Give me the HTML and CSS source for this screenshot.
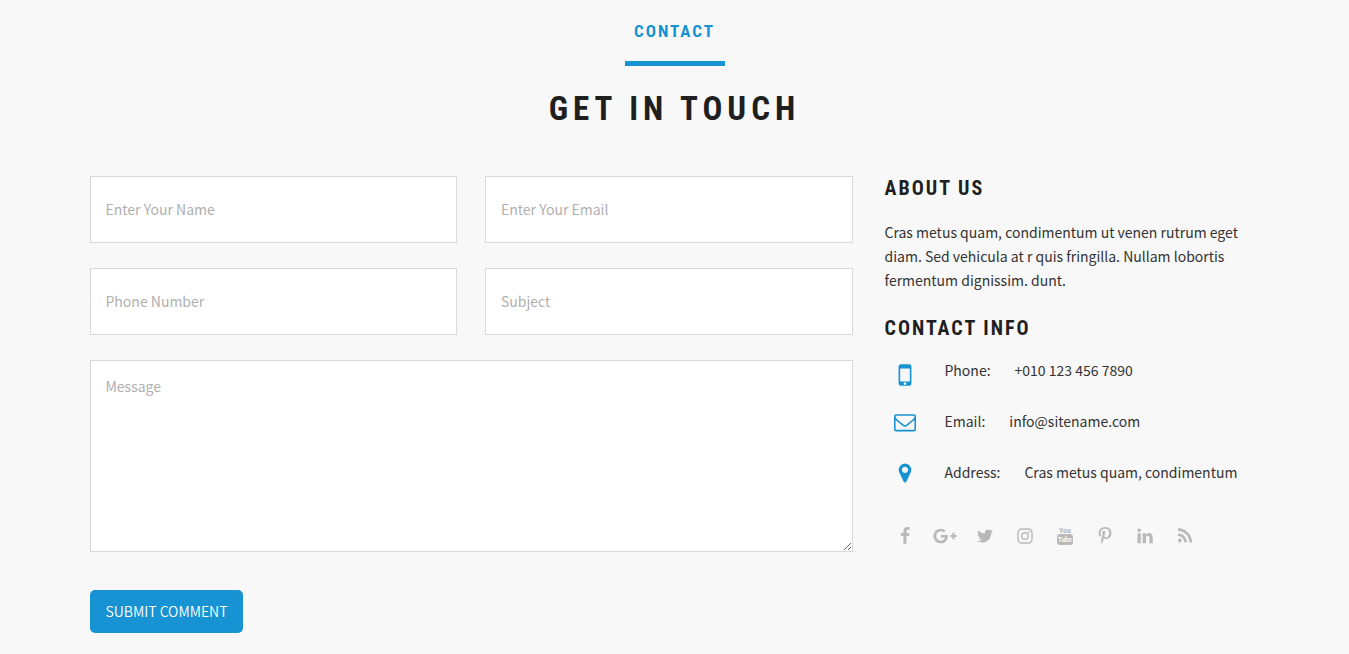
FILE: index.html
```html
<!DOCTYPE html>
<html lang="en">
<head>
    <meta charset="UTF-8">
    <meta name="viewport" content="width=device-width, initial-scale=1.0">
    <title>Contact</title>
    <link rel="stylesheet" href="styles.css">
</head>
<body>
    <section class="contact">
        <header class="section-title">
            <h4>Contact</h4>
            <h2>Get in touch</h2>
        </header>

        <div class="contact-row">
            <form class="contact-form">
                <div class="fields">
                    <input type="text" name="name" placeholder="Enter Your Name" aria-label="Enter Your Name">
                    <input type="email" name="email" placeholder="Enter Your Email" aria-label="Enter Your Email">
                    <input type="tel" name="phone" placeholder="Phone Number" aria-label="Phone Number">
                    <input type="text" name="subject" placeholder="Subject" aria-label="Subject">
                </div>
                <textarea name="message" placeholder="Message" aria-label="Message"></textarea>
                <button type="submit">SUBMIT COMMENT</button>
            </form>

            <div class="contact-info">
                <h3>About us</h3>
                <p>Cras metus quam, condimentum ut venen rutrum eget diam. Sed vehicula at r quis fringilla. Nullam lobortis fermentum dignissim. dunt.</p>

                <h3>Contact info</h3>
                <ul class="info-list">
                    <li>
                        <span class="icon"><svg class="icon-phone" viewBox="0 0 1792 1792"><path d="M976 1408q0-33-23.5-56.5t-56.5-23.5-56.5 23.5-23.5 56.5 23.5 56.5 56.5 23.5 56.5-23.5 23.5-56.5zm208-160v-704q0-13-9.5-22.5t-22.5-9.5h-512q-13 0-22.5 9.5t-9.5 22.5v704q0 13 9.5 22.5t22.5 9.5h512q13 0 22.5-9.5t9.5-22.5zm96-864v1024q0 52-38 90t-90 38h-512q-52 0-90-38t-38-90v-1024q0-52 38-90t90-38h512q52 0 90 38t38 90z"/></svg></span>
                        <span class="label">Phone:</span>
                        <span>+010 123 456 7890</span>
                    </li>
                    <li>
                        <span class="icon"><svg viewBox="0 0 1792 1792"><path d="M1664 1504v-768q-32 36-69 66-268 206-426 338-51 43-83 67t-86.5 48.5-102.5 24.5h-2q-48 0-102.5-24.5t-86.5-48.5-83-67q-158-132-426-338-37-30-69-66v768q0 13 9.5 22.5t22.5 9.5h1472q13 0 22.5-9.5t9.5-22.5zm0-1051v-24.5l-.5-13-3-12.5-5.5-9-9-7.5-14-2.5h-1472q-13 0-22.5 9.5t-9.5 22.5q0 168 147 284 193 152 401 317 6 5 35 29.5t46 37.5 44.5 31.5 50.5 27.5 43 9h2q20 0 43-9t50.5-27.5 44.5-31.5 46-37.5 35-29.5q208-165 401-317 54-43 100.5-115.5t46.5-131.5zm128-37v1088q0 66-47 113t-113 47h-1472q-66 0-113-47t-47-113v-1088q0-66 47-113t113-47h1472q66 0 113 47t47 113z"/></svg></span>
                        <span class="label">Email:</span>
                        <span>info@sitename.com</span>
                    </li>
                    <li>
                        <span class="icon"><svg viewBox="0 0 1792 1792"><path d="M1152 640q0-106-75-181t-181-75-181 75-75 181 75 181 181 75 181-75 75-181zm256 0q0 109-33 179l-364 774q-16 33-47.5 52t-67.5 19-67.5-19-46.5-52l-365-774q-33-70-33-179 0-212 150-362t362-150 362 150 150 362z"/></svg></span>
                        <span class="label">Address:</span>
                        <span>Cras metus quam, condimentum</span>
                    </li>
                </ul>

                <div class="social">
                    <a href="#" aria-label="Facebook"><svg viewBox="0 0 1792 1792"><path d="M1343 12v264h-157q-86 0-116 36t-30 108v189h293l-39 296h-254v759h-306v-759h-255v-296h255v-218q0-186 104-288.5t277-102.5q147 0 228 12z"/></svg></a>
                    <a href="#" aria-label="Google Plus"><svg class="wide" viewBox="0 0 2304 1792"><path d="M1437 913q0 208-87 370.5t-248 254-369 91.5q-149 0-285-58t-234-156-156-234-58-285 58-285 156-234 234-156 285-58q286 0 491 192l-199 191q-117-113-292-113-123 0-227.5 62t-165.5 168.5-61 232.5 61 232.5 165.5 168.5 227.5 62q83 0 152.5-23t114.5-57.5 78.5-78.5 49-83 21.5-74h-416v-252h692q12 63 12 122zm867-122v210h-209v209h-210v-209h-209v-210h209v-209h210v209h209z"/></svg></a>
                    <a href="#" aria-label="Twitter"><svg viewBox="0 0 1792 1792"><path d="M1684 408q-67 98-162 167 1 14 1 42 0 130-38 259.5t-115.5 248.5-184.5 210.5-258 146-323 54.5q-271 0-496-145 35 4 78 4 225 0 401-138-105-2-188-64.5t-114-159.5q33 5 61 5 43 0 85-11-112-23-185.5-111.5t-73.5-205.5v-4q68 38 146 41-66-44-105-115t-39-154q0-88 44-163 121 149 294.5 238.5t371.5 99.5q-8-38-8-74 0-134 94.5-228.5t228.5-94.5q140 0 236 102 109-21 205-78-37 115-142 178 93-10 186-50z"/></svg></a>
                    <a href="#" aria-label="Instagram"><svg viewBox="0 0 1792 1792"><g fill="none" stroke="currentColor" stroke-width="140"><rect x="198" y="198" width="1396" height="1396" rx="370"/><circle cx="896" cy="896" r="325"/></g><circle cx="1306" cy="486" r="92"/></svg></a>
                    <a href="#" aria-label="YouTube"><svg viewBox="0 0 18 18"><text class="yt" x="9" y="6" text-anchor="middle">You</text><rect x="1" y="7" width="16" height="11" rx="3"/><text class="yt yt-tube" x="9" y="15" text-anchor="middle">Tube</text></svg></a>
                    <a href="#" aria-label="Pinterest"><svg viewBox="0 0 1792 1792"><path d="M256 597q0-108 37.5-203.5t103.5-166.5 152-123 185-78 202-26q158 0 294 66.5t221 193.5 85 287q0 96-19 188t-60 177-100 149.5-145 103-189 38.5q-68 0-135-32t-96-88q-10 39-28 112.5t-23.5 95-20.5 71-26 71-32 62.5-46 77.5-62 86.5l-14 5-9-10q-15-157-15-188 0-92 21.5-206.5t66.5-287.5 52-203q-32-65-32-169 0-83 52-156t132-73q61 0 95 40.5t34 102.5q0 66-44 191t-44 187q0 63 45 104.5t109 41.5q55 0 102-25t78.5-68 56-95 38-110.5 20-111 6.5-99.5q0-173-109.5-269.5t-285.5-96.5q-200 0-334 129.5t-134 328.5q0 44 12.5 85t27 65 27 45.5 12.5 30.5q0 28-15 73t-37 45q-2 0-17-3-51-15-90.5-56t-61-94.5-32.5-108-11-106.5z"/></svg></a>
                    <a href="#" aria-label="LinkedIn"><svg viewBox="0 0 1792 1792"><path d="M477 625v991h-330v-991h330zm21-306q1 73-50.5 122t-135.5 49h-2q-82 0-132-49t-50-122q0-74 51.5-122.5t134.5-48.5 133 48.5 51 122.5zm1166 729v568h-329v-530q0-105-40.5-164.5t-126.5-59.5q-63 0-105.5 34.5t-63.5 85.5q-11 30-11 81v553h-329q2-399 2-647t-1-296l-1-48h329v144h-2q20-32 41-56t56.5-52 87-43.5 114.5-15.5q171 0 275 113.5t104 332.5z"/></svg></a>
                    <a href="#" aria-label="RSS"><svg viewBox="0 0 1792 1792"><path d="M576 1344q0 80-56 136t-136 56-136-56-56-136 56-136 136-56 136 56 56 136zm512 123q2 28-17 48-18 21-47 21h-135q-25 0-43-16.5t-20-41.5q-22-229-184.5-391.5t-391.5-184.5q-25-2-41.5-20t-16.5-43v-135q0-29 21-47 17-17 43-17h5q160 13 306 80.5t259 181.5q114 113 181.5 259t80.5 306zm512 2q2 27-18 47-18 20-46 20h-143q-26 0-44.5-17.5t-19.5-42.5q-12-215-101-408.5t-231.5-336-336-231.5-408.5-102q-25-1-42.5-19.5t-17.5-43.5v-143q0-28 20-46 18-18 44-18h3q262 13 501.5 120t425.5 294q187 186 294 425.5t120 501.5z"/></svg></a>
                </div>
            </div>
        </div>
    </section>
</body>
</html>
```
FILE: styles.css
```css
* {
    box-sizing: border-box;
}

body {
    margin: 0;
    background-color: #f8f8f8;
    color: #333;
    font-family: "Source Sans Pro", "Noto Sans CJK SC", sans-serif;
    font-size: 14px;
    line-height: 24px;
}

h2,
h3,
h4 {
    margin: 0;
    color: #1f1f1f;
    font-family: "Roboto Condensed", "Liberation Sans Narrow", Roboto, sans-serif;
    font-weight: 700;
    text-transform: uppercase;
}

.contact {
    max-width: 1170px;
    margin: 0 auto;
    padding: 20px 0;
}

/* Title */
.section-title {
    display: flex;
    flex-direction: column;
    align-items: center;
    margin-bottom: 46px;
}

.section-title h4 {
    display: flex;
    flex-direction: column;
    align-items: center;
    color: #1792d2;
    font-size: 17px;
    line-height: 22px;
    letter-spacing: 2px;
}

.section-title h4::after {
    content: "";
    width: 100px;
    height: 5px;
    margin-top: 19px;
    background-color: #1792d2;
}

.section-title h2 {
    margin-top: 22px;
    font-size: 33px;
    line-height: 42px;
    letter-spacing: 5px;
}

.contact-row {
    display: flex;
    gap: 32px;
}

/* Form */
.contact-form {
    flex: 763;
}

.fields {
    display: grid;
    grid-template-columns: 1fr 1fr;
    gap: 25px 28px;
    margin-bottom: 25px;
}

.contact-form input,
.contact-form textarea {
    display: block;
    width: 100%;
    border: 1px solid #d9d9d9;
    background-color: #fff;
    color: #333;
    font: inherit;
    padding: 13px 15px 15px;
}

.contact-form input {
    height: 67px;
}

.contact-form textarea {
    height: 192px;
    resize: vertical;
}

.contact-form ::placeholder {
    color: #b0b0b0;
}

.contact-form button {
    margin-top: 38px;
    padding: 9px 16px;
    border: none;
    border-radius: 5px;
    background-color: #1792d2;
    color: #fff;
    font: inherit;
    font-weight: 350;
    line-height: 25px;
    cursor: pointer;
}

/* Info column */
.contact-info {
    flex: 375;
}

.contact-info h3 {
    font-size: 20px;
    line-height: 24px;
    letter-spacing: 2px;
}

.contact-info p {
    margin: 20px 0 24px;
}

.info-list {
    margin: 18px 0 0;
    padding: 0;
    list-style: none;
}

.info-list li {
    display: flex;
    height: 51px;
}

.info-list .icon {
    display: flex;
    justify-content: center;
    align-items: flex-start;
    width: 40px;
    margin-right: 20px;
    padding-top: 2px;
    color: #1792d2;
}

.info-list .label {
    margin-right: 24px;
}

svg {
    display: block;
    width: 22px;
    height: 22px;
    fill: currentColor;
}

.icon-phone {
    width: 30px;
    height: 30px;
}

.social {
    display: flex;
    margin-top: 16px;
}

.social a {
    display: flex;
    justify-content: center;
    width: 40px;
    color: #b9b9b9;
}

.social svg {
    width: 18px;
    height: 18px;
}

.social .wide {
    width: 24px;
}

.yt {
    font-family: "Roboto Condensed", "Liberation Sans Narrow", sans-serif;
    font-size: 8px;
    font-weight: 700;
}

.yt-tube {
    fill: #f8f8f8;
    font-size: 7px;
}

@media (max-width: 1200px) {
    .contact {
        padding: 20px 15px;
    }
}

@media (max-width: 800px) {
    .contact-row {
        flex-direction: column;
    }
}
```
